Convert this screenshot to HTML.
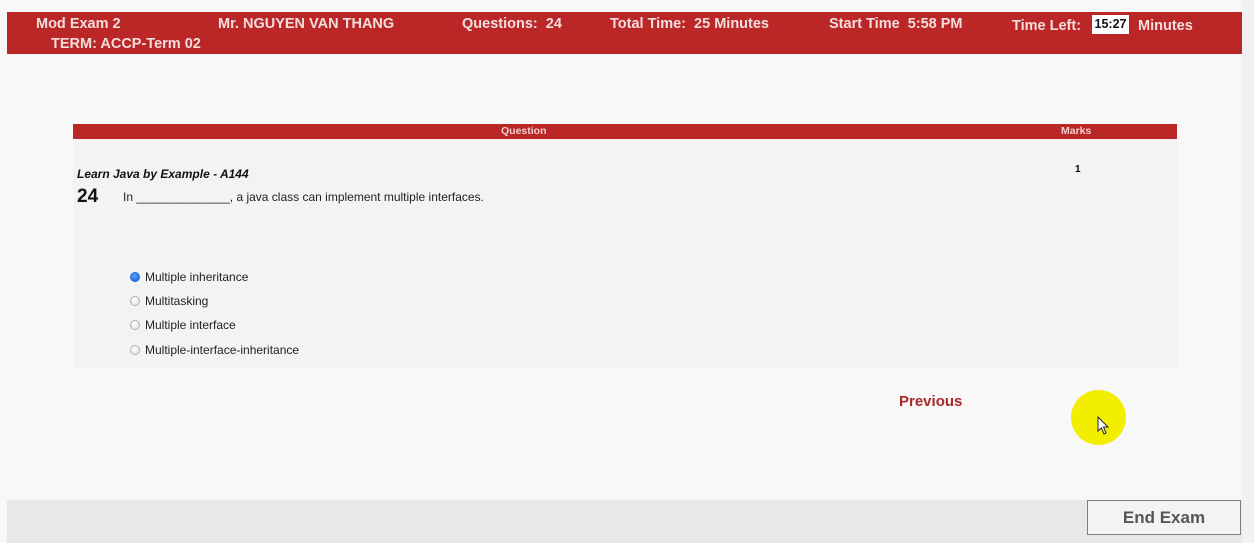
<!DOCTYPE html>
<html><head><meta charset="utf-8"><style>
*{margin:0;padding:0;box-sizing:border-box}
body{width:1254px;height:543px;overflow:hidden;background:#f8f8f8;font-family:"Liberation Sans",sans-serif;position:relative}
.abs{position:absolute;white-space:nowrap}
.hdr{position:absolute;left:7px;top:12px;width:1235px;height:42px;background:#bb2626}
.h{position:absolute;color:#f3dede;font-weight:bold;font-size:14.5px}
.tbl{position:absolute;left:73px;top:124px;width:1104px;height:244px;background:#f3f3f3}
.th{position:absolute;left:0;top:0;width:1104px;height:15px;background:#bb2626;color:#f0d0d0;font-size:10.5px;font-weight:bold}
.r{position:absolute;width:10px;height:10px;border-radius:50%;border:1px solid #b0b0b0;background:radial-gradient(circle at 40% 35%,#fff,#ddd)}
.opt{position:absolute;font-size:12px;color:#222}
</style></head><body>
<div style="position:absolute;right:0;top:0;width:12px;height:543px;background:#f1f1f1"></div>
<div class="hdr">
<div class="h" style="left:29px;top:4px">Mod Exam 2</div>
<div class="h" style="left:44px;top:24px">TERM: ACCP-Term 02</div>
<div class="h" style="left:211px;top:4px">Mr. NGUYEN VAN THANG</div>
<div class="h" style="left:455px;top:4px">Questions:&nbsp; 24</div>
<div class="h" style="left:603px;top:4px">Total Time:&nbsp; 25 Minutes</div>
<div class="h" style="left:822px;top:4px">Start Time&nbsp; 5:58 PM</div>
<div class="h" style="left:1005px;top:6px">Time Left:</div>
<div style="position:absolute;left:1085px;top:3px;width:37px;height:19px;background:#fff;color:#111;font-size:12.5px;font-weight:bold;text-align:center;line-height:19px">15:27</div>
<div class="h" style="left:1131px;top:6px">Minutes</div>
</div>
<div class="tbl">
<div class="th"><span class="abs" style="left:428px;top:1px">Question</span><span class="abs" style="left:988px;top:1px">Marks</span></div>
<div class="abs" style="left:1002px;top:40px;font-size:10px;font-weight:bold">1</div>
<div class="abs" style="left:4px;top:43px;font-size:12px;font-weight:bold;font-style:italic;color:#111">Learn Java by Example - A144</div>
<div class="abs" style="left:4px;top:62px;font-size:19px;font-weight:bold;color:#111">24</div>
<div class="abs" style="left:50px;top:66px;font-size:12px;color:#222">In ______________, a java class can implement multiple interfaces.</div>
<div class="r" style="left:57px;top:148px;border-color:#1a6fe0;background:radial-gradient(circle at 40% 35%,#5aa0ff,#0a5fe0)"></div>
<div class="opt" style="left:72px;top:146px">Multiple inheritance</div>
<div class="r" style="left:57px;top:172px"></div>
<div class="opt" style="left:72px;top:170px">Multitasking</div>
<div class="r" style="left:57px;top:196px"></div>
<div class="opt" style="left:72px;top:194px">Multiple interface</div>
<div class="r" style="left:57px;top:221px"></div>
<div class="opt" style="left:72px;top:219px">Multiple-interface-inheritance</div>
</div>
<div class="abs" style="left:899px;top:393px;color:#a82828;font-weight:bold;font-size:15px">Previous</div>
<div style="position:absolute;left:1071px;top:390px;width:55px;height:55px;border-radius:50%;background:#f3ee00"></div>
<svg style="position:absolute;left:1097px;top:416px" width="14" height="20" viewBox="0 0 14 20"><path d="M1 1 L1 15 L4.5 12 L7 18 L9 17 L6.5 11 L11 11 Z" fill="#fff" stroke="#222" stroke-width="1"/></svg>
<div style="position:absolute;left:7px;top:500px;width:1235px;height:43px;background:#e8e8e8"></div>
<div style="position:absolute;left:1087px;top:500px;width:154px;height:35px;border:1px solid #8a7b7b;background:#f3f3f3;color:#555;font-weight:bold;font-size:17px;text-align:center;line-height:33px">End Exam</div>
</body></html>
